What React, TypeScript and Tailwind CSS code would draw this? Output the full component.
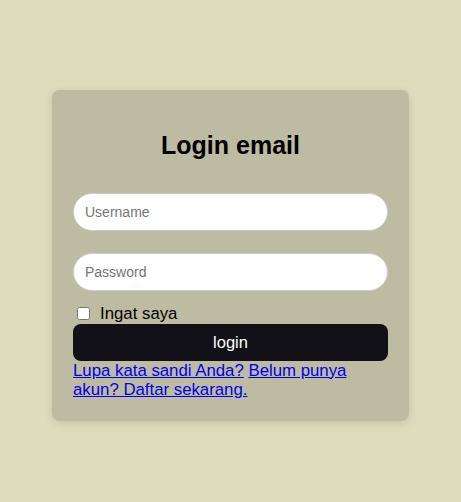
export default function App() {
  return (
    <div className="min-h-screen bg-[#dddcbd] pt-[90px] flex justify-center font-['Liberation_Sans',Arial,sans-serif]">
      <div className="w-[357px] h-[331px] rounded-lg bg-[#bdbba1] px-[21px] pt-[42px] shadow-[0_2px_8px_rgba(0,0,0,0.12)]">
        <h2 className="text-[25px] font-bold text-center text-black leading-[27.6px]">Login email</h2>

        <input
          type="text"
          placeholder="Username"
          className="mt-[33px] block w-full h-[38px] rounded-full border border-[#cfcfcf] bg-white px-[11px] text-[14px] text-black placeholder:text-[#757575] outline-none"
        />
        <input
          type="password"
          placeholder="Password"
          className="mt-[22px] block w-full h-[38px] rounded-full border border-[#cfcfcf] bg-white px-[11px] text-[14px] text-black placeholder:text-[#757575] outline-none"
        />

        <label className="mt-[13px] flex items-center h-[19px] text-[16.8px] text-black">
          <input type="checkbox" className="m-0 ml-[4px] w-[13px] h-[13px]" />
          <span className="ml-[10px]">Ingat saya</span>
        </label>

        <button className="mt-[1px] block w-full h-[37px] rounded-lg bg-[#121118] text-white text-[16.5px]">
          login
        </button>

        <p className="text-[16.8px] leading-[19px] text-[#0000ee]">
          <a href="#" className="underline">Lupa kata sandi Anda?</a>{" "}
          <a href="#" className="underline">Belum punya akun? Daftar sekarang.</a>
        </p>
      </div>
    </div>
  );
}
